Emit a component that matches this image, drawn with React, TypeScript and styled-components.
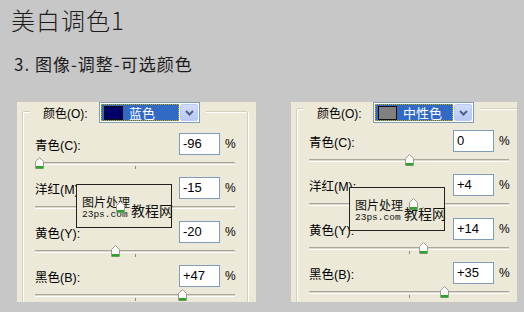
import React from "react";
import styled, { createGlobalStyle } from "styled-components";

const GlobalStyle = createGlobalStyle`
  body {
    margin: 0;
    background: #c7c7c7;
    font-family: "Liberation Sans", "Noto Sans CJK SC", sans-serif;
  }
`;

const Page = styled.div`
  width: 524px;
  height: 312px;
  overflow: hidden;
`;
const Title = styled.h1`
  margin: 0;
  padding: 5px 0 0 11px;
  font-family: "Noto Sans CJK SC", sans-serif;
  font-weight: 300;
  font-size: 24px;
  line-height: 30px;
  letter-spacing: 1px;
  color: #1c1c1c;
`;
const SubTitle = styled.h2`
  margin: 19px 0 0 14px;
  font-family: "Noto Sans CJK SC", sans-serif;
  font-weight: 400;
  font-size: 17px;
  line-height: 20px;
  letter-spacing: 1px;
  color: #1c1c1c;
`;
const PanelRow = styled.div`
  display: flex;
  gap: 35px;
  padding-left: 17px;
  margin-top: 28px;
`;
const Panel = styled.div<{ $w: number }>`
  position: relative;
  width: ${(p) => p.$w}px;
  height: 200px;
  background: #ece9d8;
  overflow: hidden;
`;
const GroupBox = styled.div<{ $line: number }>`
  width: 226px;
  box-sizing: border-box;
  margin: ${(p) => p.$line}px 0 0 5px;
  padding: 0 12px;
  height: 260px;
  border: 1px solid #d0d0bf;
  border-radius: 2px;
  box-shadow: inset 1px 1px 0 #fff, 1px 1px 0 #fff;
`;
const Legend = styled.div<{ $line: number }>`
  display: flex;
  align-items: center;
  width: fit-content;
  margin: -${(p) => p.$line + 1}px 0 0 -5px;
  padding: 0 6px 0 13px;
  background: #ece9d8;
`;
const LegendLabel = styled.span`
  width: 56px;
  font-size: 12px;
  color: #000;
`;
const Dropdown = styled.div`
  display: flex;
  width: 101px;
  height: 21px;
  box-sizing: border-box;
  border: 1px solid #7f9db9;
  background: #fff;
  padding: 1px;
  gap: 1px;
`;
const Selected = styled.div`
  flex: 1;
  display: flex;
  align-items: center;
  gap: 6px;
  padding: 0 2px;
  background: #316ac5;
  border: 1px dotted #c8a800;
  color: #fff;
  font-size: 13px;
  font-family: "Noto Sans CJK SC", sans-serif;
`;
const Swatch = styled.span<{ $c: string }>`
  width: 17px;
  height: 12px;
  background: ${(p) => p.$c};
  border: 1px solid #111;
`;
const DropBtn = styled.div`
  width: 16px;
  display: flex;
  align-items: center;
  justify-content: center;
  border: 1px solid #b9cbf3;
  border-radius: 2px;
  background: linear-gradient(#d2ddfb, #b6c8f7);
`;
const Controls = styled.div<{ $gap: number }>`
  margin-top: ${(p) => p.$gap}px;
`;
const Control = styled.div`
  height: 44px;
`;
const FieldRow = styled.div`
  display: flex;
  align-items: center;
  justify-content: space-between;
  height: 22px;
`;
const Label = styled.span`
  font-size: 12.5px;
  color: #000;
  font-family: "Liberation Sans", "Noto Sans CJK SC", sans-serif;
`;
const ValueWrap = styled.div`
  display: flex;
  align-items: center;
`;
const Input = styled.div`
  width: 41px;
  height: 22px;
  box-sizing: border-box;
  border: 1px solid #7f9db9;
  background: #fff;
  padding: 2px 3px;
  font-size: 13px;
  line-height: 16px;
  color: #000;
`;
const Pct = styled.span`
  width: 10px;
  margin-left: 5px;
  font-size: 12px;
  color: #000;
`;
const SliderBox = styled.div`
  position: relative;
  height: 22px;
  box-sizing: border-box;
  padding-top: 7px;
`;
const Track = styled.div`
  position: relative;
  height: 1px;
  border-top: 1px solid #a9a79b;
  border-bottom: 1px solid #fff;
  background: #dcd9ca;
`;
const Tick = styled.div`
  position: absolute;
  left: 100px;
  top: 3px;
  width: 1px;
  height: 3px;
  background: #8d8b80;
`;
const Thumb = styled.svg`
  position: absolute;
  top: 2px;
  z-index: 2;
`;
const Watermark = styled.div<{ $x: number; $y: number }>`
  position: absolute;
  left: ${(p) => p.$x}px;
  top: ${(p) => p.$y}px;
  z-index: 1;
  width: 96px;
  height: 44px;
  box-sizing: border-box;
  border: 1px solid #222;
  background: #ece9d8;
  display: flex;
  align-items: center;
  padding: 2px 0 0 5px;
  white-space: nowrap;
`;
const MarkCol = styled.div`
  display: flex;
  flex-direction: column;
  flex-shrink: 0;
`;
const MarkCn = styled.span`
  font-family: "Noto Sans CJK SC", sans-serif;
  font-size: 12px;
  line-height: 15px;
  color: #111;
`;
const MarkUrl = styled.span`
  font-family: "Liberation Mono", monospace;
  font-size: 9.5px;
  line-height: 12px;
  color: #111;
`;
const MarkBig = styled.span`
  flex-shrink: 0;
  margin: 6px 0 0 1px;
  font-family: "Noto Sans CJK SC", sans-serif;
  font-size: 14px;
  color: #111;
`;

type Item = { label: string; value: string; num: number };

const leftItems: Item[] = [
  { label: "青色(C):", value: "-96", num: -96 },
  { label: "洋红(M):", value: "-15", num: -15 },
  { label: "黄色(Y):", value: "-20", num: -20 },
  { label: "黑色(B):", value: "+47", num: 47 },
];
const rightItems: Item[] = [
  { label: "青色(C):", value: "0", num: 0 },
  { label: "洋红(M):", value: "+4", num: 4 },
  { label: "黄色(Y):", value: "+14", num: 14 },
  { label: "黑色(B):", value: "+35", num: 35 },
];

const Chevron = () => (
  <svg width="9" height="6" viewBox="0 0 9 6">
    <path d="M1 1 L4.5 4.5 L8 1" fill="none" stroke="#4d6185" strokeWidth="2" />
  </svg>
);

const SliderThumb = ({ num }: { num: number }) => (
  <Thumb width="9" height="12" viewBox="0 0 9 12" style={{ left: num + 100 - 4.5 }}>
    <path d="M0.5 4.5 L4.5 0.5 L8.5 4.5 V11.5 H0.5 Z" fill="#fbfbf8" stroke="#9a9a90" />
    <rect x="1" y="9" width="7" height="2.5" fill="#2aa52a" />
  </Thumb>
);

const ColorPanel = ({
  width,
  line,
  swatch,
  name,
  items,
  markX,
  markY,
}: {
  width: number;
  line: number;
  swatch: string;
  name: string;
  items: Item[];
  markX: number;
  markY: number;
}) => (
  <Panel $w={width}>
    <GroupBox $line={line}>
      <Legend $line={line}>
        <LegendLabel>颜色(O):</LegendLabel>
        <Dropdown>
          <Selected>
            <Swatch $c={swatch} />
            {name}
          </Selected>
          <DropBtn>
            <Chevron />
          </DropBtn>
        </Dropdown>
      </Legend>
      <Controls $gap={line + 1}>
        {items.map((it) => (
          <Control key={it.label}>
            <FieldRow>
              <Label>{it.label}</Label>
              <ValueWrap>
                <Input>{it.value}</Input>
                <Pct>%</Pct>
              </ValueWrap>
            </FieldRow>
            <SliderBox>
              <Track>
                <Tick />
              </Track>
              <SliderThumb num={it.num} />
            </SliderBox>
          </Control>
        ))}
      </Controls>
    </GroupBox>
    <Watermark $x={markX} $y={markY}>
      <MarkCol>
        <MarkCn>图片处理</MarkCn>
        <MarkUrl>23ps.com</MarkUrl>
      </MarkCol>
      <MarkBig>教程网</MarkBig>
    </Watermark>
  </Panel>
);

const App = () => {
  return (
    <Page>
      <GlobalStyle />
      <Title>美白调色1</Title>
      <SubTitle>3. 图像-调整-可选颜色</SubTitle>
      <PanelRow>
        <ColorPanel width={239} line={9} swatch="#000066" name="蓝色" items={leftItems} markX={59} markY={82} />
        <ColorPanel width={226} line={6} swatch="#808080" name="中性色" items={rightItems} markX={58} markY={85} />
      </PanelRow>
    </Page>
  );
};

export default App;
